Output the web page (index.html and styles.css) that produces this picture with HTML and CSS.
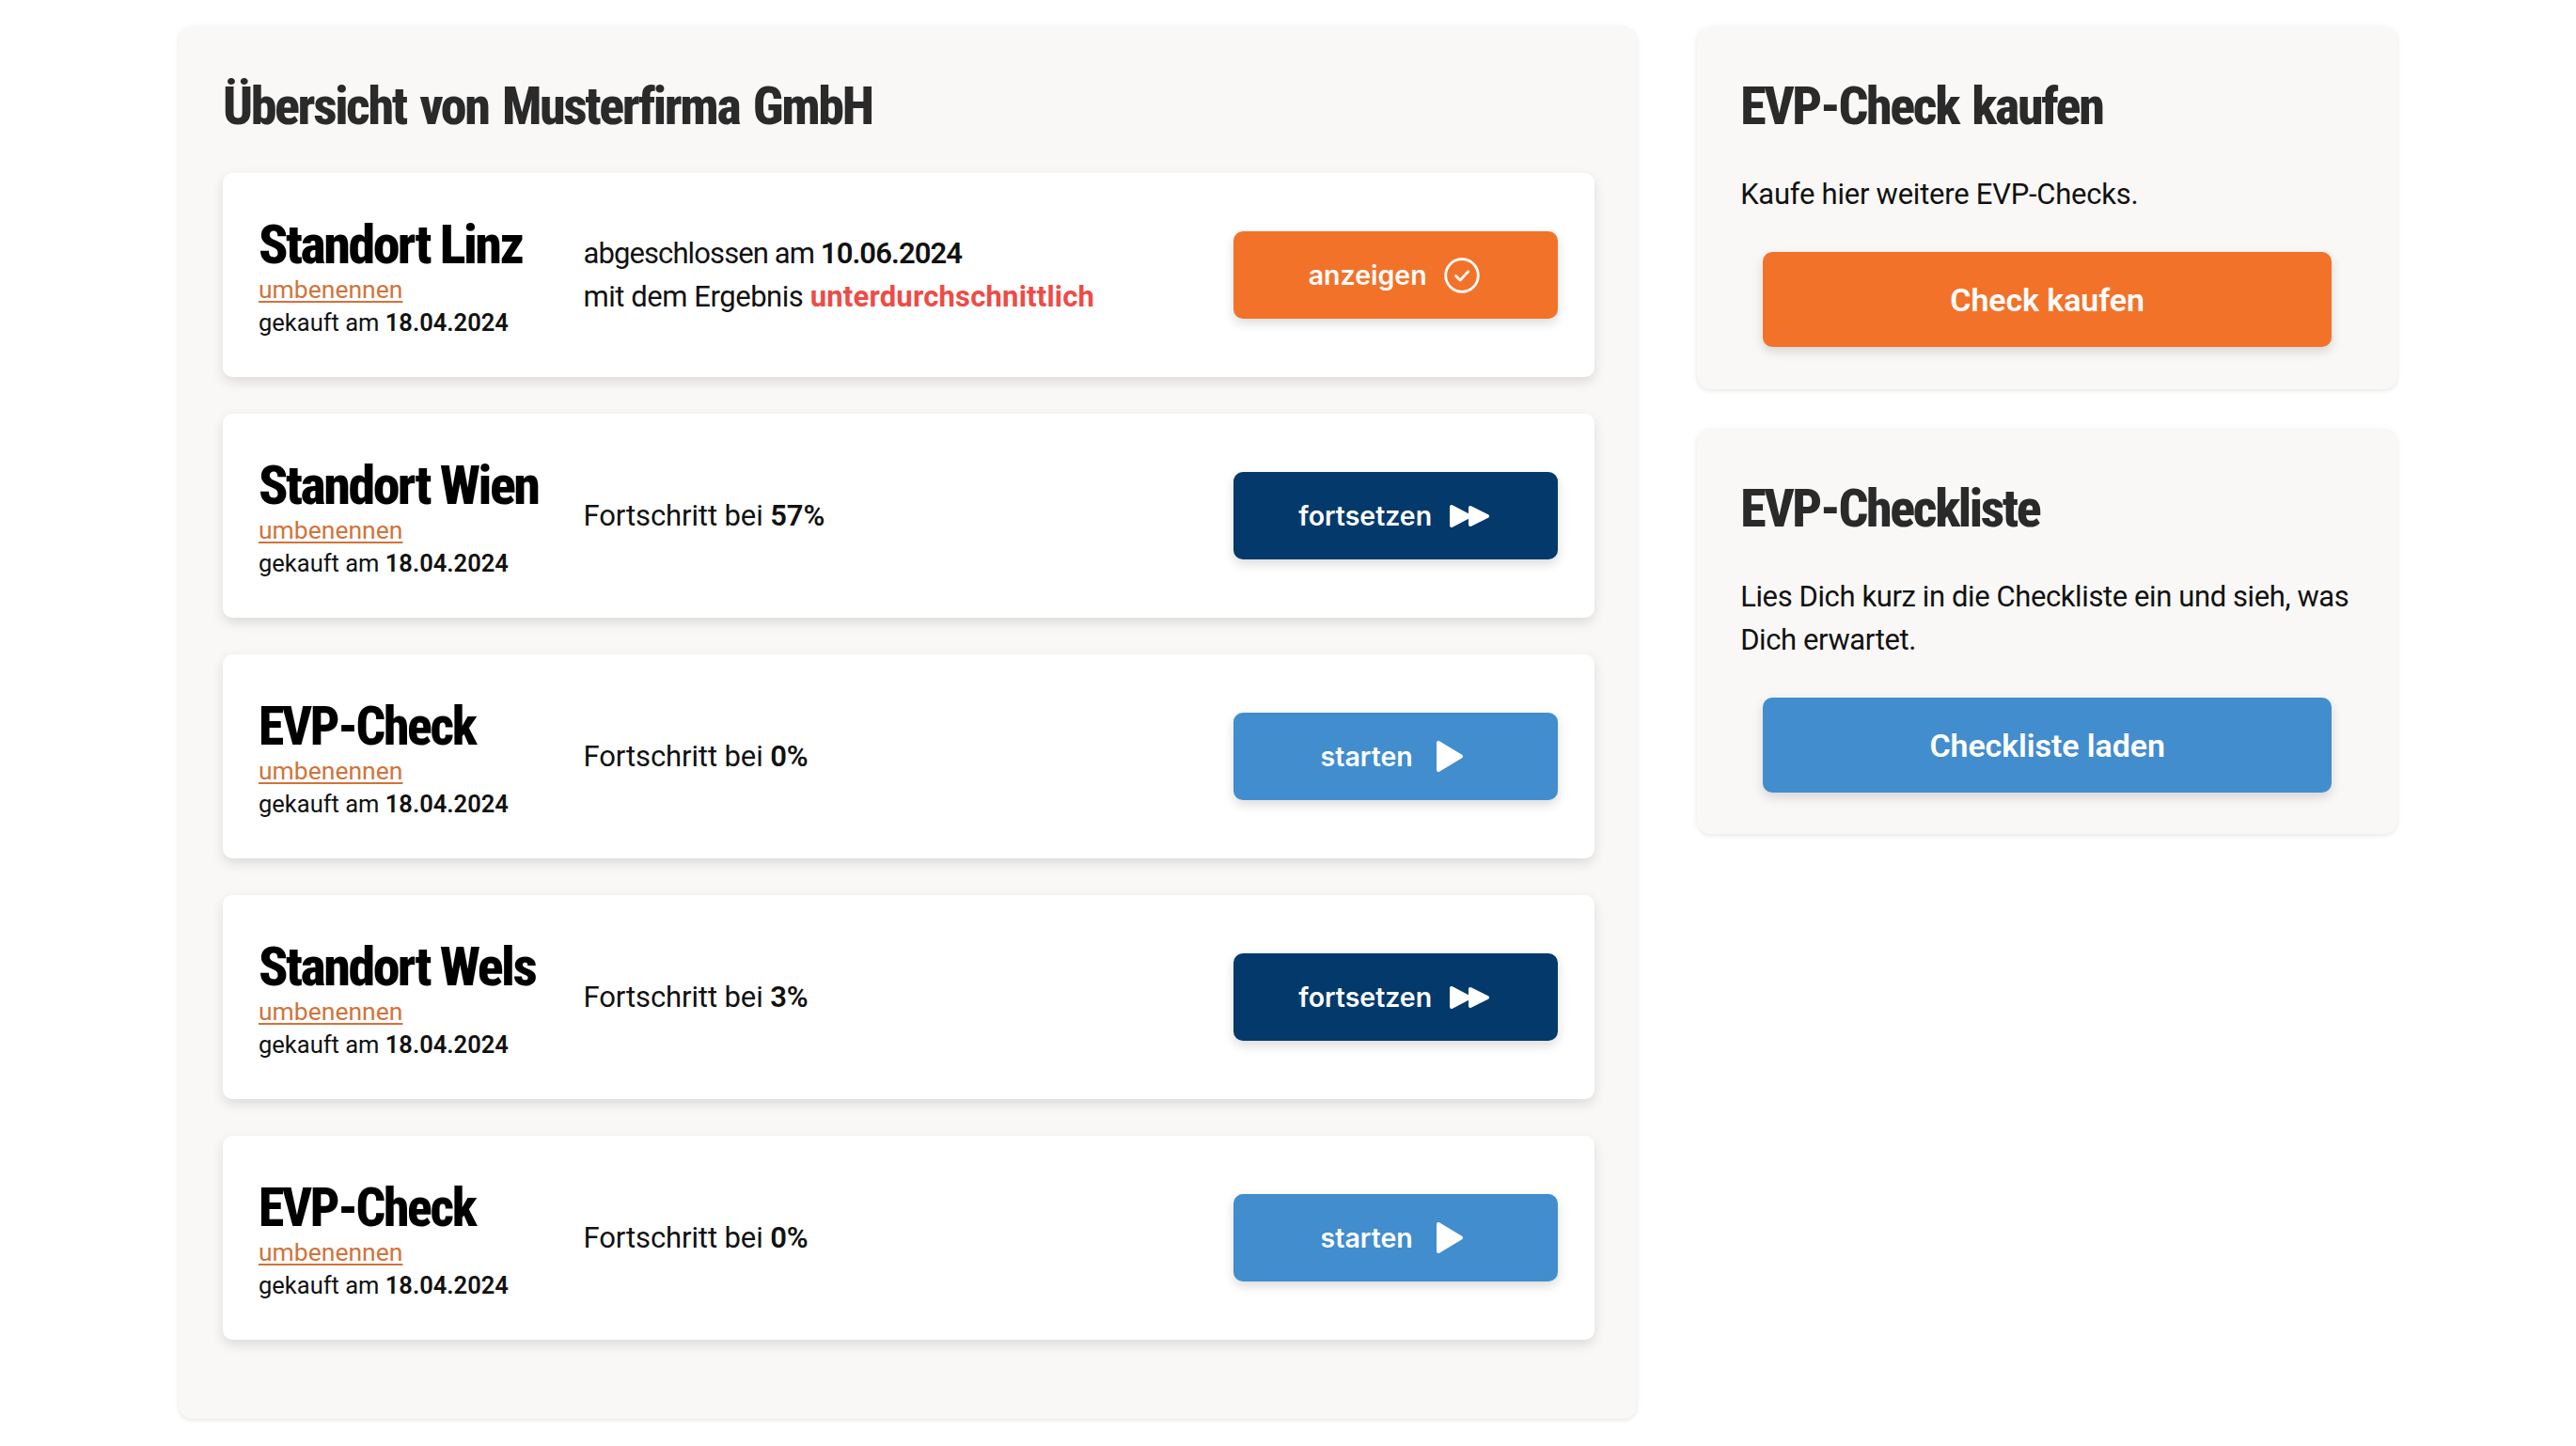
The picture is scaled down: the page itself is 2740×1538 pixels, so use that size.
FILE: index.html
```html
<!DOCTYPE html>
<html lang="de">
<head>
<meta charset="utf-8">
<title>Übersicht</title>
<link rel="stylesheet" href="styles.css">
</head>
<body>
<main class="layout">
  <section class="panel panel-main">
    <h1 class="panel-title">Übersicht von Musterfirma GmbH</h1>

    <article class="card">
      <div class="meta">
        <h2 class="site-name">Standort Linz</h2>
        <a class="rename" href="#">umbenennen</a>
        <p class="bought">gekauft am <b>18.04.2024</b></p>
      </div>
      <p class="status status-done"><span class="status-date">abgeschlossen am <b>10.06.2024</b></span><br>mit dem Ergebnis <b class="bad">unterdurchschnittlich</b></p>
      <a class="btn btn-orange" href="#"><span>anzeigen</span>
        <svg class="ico ico-check" viewBox="0 0 38 38"><circle cx="19" cy="19" r="17.3" fill="none" stroke="#fff" stroke-width="2.8"/><path d="M12.5 19.5l4.6 4.6 8.600-9.400" fill="none" stroke="#fff" stroke-width="2.8" stroke-linecap="round" stroke-linejoin="round"/></svg>
      </a>
    </article>

    <article class="card">
      <div class="meta">
        <h2 class="site-name">Standort Wien</h2>
        <a class="rename" href="#">umbenennen</a>
        <p class="bought">gekauft am <b>18.04.2024</b></p>
      </div>
      <p class="status">Fortschritt bei <b>57%</b></p>
      <a class="btn btn-navy" href="#"><span>fortsetzen</span>
        <svg class="ico ico-ff" viewBox="0 0 43 26"><path d="M3 3v20l19-10zM23 4v18l18-9z" fill="#fff" stroke="#fff" stroke-width="4" stroke-linejoin="round"/></svg>
      </a>
    </article>

    <article class="card">
      <div class="meta">
        <h2 class="site-name site-name-evp">EVP-Check</h2>
        <a class="rename" href="#">umbenennen</a>
        <p class="bought">gekauft am <b>18.04.2024</b></p>
      </div>
      <p class="status">Fortschritt bei <b>0%</b></p>
      <a class="btn btn-blue" href="#"><span>starten</span>
        <svg class="ico ico-play" viewBox="0 0 30 35"><path d="M3 3v29l24-14.500z" fill="#fff" stroke="#fff" stroke-width="4" stroke-linejoin="round"/></svg>
      </a>
    </article>

    <article class="card">
      <div class="meta">
        <h2 class="site-name">Standort Wels</h2>
        <a class="rename" href="#">umbenennen</a>
        <p class="bought">gekauft am <b>18.04.2024</b></p>
      </div>
      <p class="status">Fortschritt bei <b>3%</b></p>
      <a class="btn btn-navy" href="#"><span>fortsetzen</span>
        <svg class="ico ico-ff" viewBox="0 0 43 26"><path d="M3 3v20l19-10zM23 4v18l18-9z" fill="#fff" stroke="#fff" stroke-width="4" stroke-linejoin="round"/></svg>
      </a>
    </article>

    <article class="card">
      <div class="meta">
        <h2 class="site-name site-name-evp">EVP-Check</h2>
        <a class="rename" href="#">umbenennen</a>
        <p class="bought">gekauft am <b>18.04.2024</b></p>
      </div>
      <p class="status">Fortschritt bei <b>0%</b></p>
      <a class="btn btn-blue" href="#"><span>starten</span>
        <svg class="ico ico-play" viewBox="0 0 30 35"><path d="M3 3v29l24-14.500z" fill="#fff" stroke="#fff" stroke-width="4" stroke-linejoin="round"/></svg>
      </a>
    </article>
  </section>

  <aside class="side">
    <section class="panel panel-buy">
      <h1 class="panel-title">EVP-Check kaufen</h1>
      <p class="side-text">Kaufe hier weitere EVP-Checks.</p>
      <a class="cta btn-orange" href="#">Check kaufen</a>
    </section>
    <section class="panel panel-list">
      <h1 class="panel-title">EVP-Checkliste</h1>
      <p class="side-text">Lies Dich kurz in die Checkliste ein und sieh, was Dich erwartet.</p>
      <a class="cta btn-blue" href="#">Checkliste laden</a>
    </section>
  </aside>
</main>
</body>
</html>
```
FILE: styles.css
```css
* { box-sizing: border-box; }
html, body { margin: 0; height: 100%; }
body {
  background: #fff;
  color: #111;
  font-family: "Roboto", "Liberation Sans", sans-serif;
  font-size: 30px;
  overflow: hidden;
}
p, h1, h2 { margin: 0; }
a { text-decoration: none; }
b { font-weight: 600; }

.layout {
  display: flex;
  align-items: flex-start;
  gap: 64px;
  padding: 28px 190px 0 189.5px;
}
.panel {
  background: #f9f8f6;
  border-radius: 14px;
  box-shadow: 0 2px 4px rgba(0, 0, 0, .08), 0 0 12px rgba(0, 0, 0, .025);
  padding: 48px 46px;
}
.panel-main { width: 1552px; height: 1481px; padding-left: 47.5px; padding-right: 45.5px; }
.side { width: 745px; display: flex; flex-direction: column; gap: 42px; }
.panel-buy { height: 386px; }
.panel-list { height: 431px; }

.panel-title {
  font-family: "Roboto", sans-serif;
  font-stretch: 75%;
  font-size: 56px;
  line-height: 76px;
  font-weight: 800;
  letter-spacing: -2.4px;
  word-spacing: 4px;
  color: #2a2a2a;
  height: 109px;
  margin-top: -1px;
  white-space: nowrap;
}

.card {
  height: 217px;
  margin-bottom: 39px;
  padding: 0 39px 0 38px;
  background: #fff;
  border-radius: 10px;
  box-shadow: 0 5px 13px rgba(0, 0, 0, .12);
  display: grid;
  grid-template-columns: 345.500px 1fr 345px;
  align-items: center;
}
.meta { display: flex; flex-direction: column; align-items: flex-start; padding-top: 5px; }
.site-name {
  font-family: "Roboto", sans-serif;
  font-stretch: 75%;
  font-size: 58px;
  line-height: 62px;
  font-weight: 800;
  letter-spacing: -2.500px;
  color: #000;
  white-space: nowrap;
}
.site-name-evp { transform: scaleX(.96); transform-origin: left center; }
.rename {
  font-size: 26.500px;
  line-height: 34px;
  color: #d2733a;
  text-decoration: underline;
  text-underline-offset: 3px;
}
.bought { font-size: 25.500px; line-height: 36px; }
.status { font-size: 31px; line-height: 46px; letter-spacing: -.1px; }
.status-done { letter-spacing: -.45px; }
.status-date { letter-spacing: -.9px; }
.bad { color: #ee4b47; font-weight: 700; letter-spacing: .2px; }

.btn {
  height: 93px;
  border-radius: 10px;
  color: #fff;
  font-family: "Inter", "Roboto", sans-serif;
  font-size: 28.500px;
  font-weight: 600;
  display: flex;
  align-items: center;
  justify-content: center;
  gap: 18px;
  padding-right: 3px;
  box-shadow: 0 5px 12px rgba(0, 0, 0, .14);
}
.btn-orange { background: #f3722a; }
.btn-navy { background: #033a6b; }
.btn-blue { background: #428dce; }
.ico { display: block; flex: none; }
.ico-check { width: 38px; height: 38px; }
.ico-ff { width: 43px; height: 26px; }
.ico-play { width: 30px; height: 35px; margin-left: 6px; margin-right: 4px; }

.side-text { font-size: 31px; line-height: 46px; letter-spacing: -.25px; color: #111; }
.panel-list .side-text { letter-spacing: -.4px; }
.cta {
  display: flex;
  align-items: center;
  justify-content: center;
  height: 101px;
  margin: 38px 24px 0;
  border-radius: 10px;
  color: #fff;
  font-size: 34px;
  font-weight: 600;
  letter-spacing: -.1px;
  box-shadow: 0 5px 12px rgba(0, 0, 0, .14);
}
```
